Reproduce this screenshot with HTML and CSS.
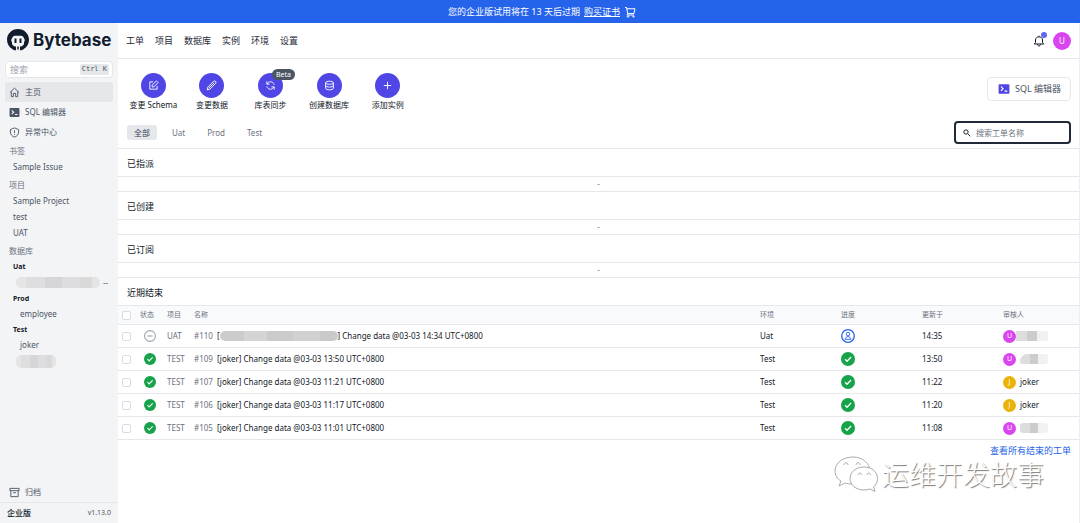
FILE: index.html
```html
<!DOCTYPE html>
<html lang="zh-CN">
<head>
<meta charset="utf-8">
<meta name="viewport" content="width=device-width, initial-scale=1">
<title>Bytebase</title>
<link rel="stylesheet" href="styles.css">
</head>
<body>
<svg class="sprite" aria-hidden="true">
  <symbol id="i-check" viewBox="0 0 20 20"><circle cx="10" cy="10" r="10" fill="#16a34a"/><path d="M5.8 10.4l2.8 2.8 5.8-6" fill="none" stroke="#fff" stroke-width="1.8"/></symbol>
  <symbol id="i-cancel" viewBox="0 0 20 20"><circle cx="10" cy="10" r="9" fill="#fff" stroke="#9ca3af" stroke-width="1.8"/><path d="M5.5 10h9" stroke="#9ca3af" stroke-width="1.8"/></symbol>
  <symbol id="i-user" viewBox="0 0 20 20"><circle cx="10" cy="10" r="9" fill="#fff" stroke="#2563eb" stroke-width="1.8"/><circle cx="10" cy="7.2" r="2.5" fill="none" stroke="#2563eb" stroke-width="1.3"/><path d="M5.9 14.8c.2-5.2 8-5.2 8.200 0z" fill="none" stroke="#2563eb" stroke-width="1.300" stroke-linejoin="round"/></symbol>
  <symbol id="i-term" viewBox="0 0 20 20"><rect x="1" y="2" width="18" height="16" rx="1.500" fill="currentColor"/><path d="M5 6l3.500 3.500L5 13M11 13.500h4.500" fill="none" stroke="#fff" stroke-width="1.900"/></symbol>
</svg>

<div class="banner">
  <span>您的企业版试用将在 13 天后过期</span>
  <a href="#">购买证书</a>
  <svg class="cart" viewBox="0 0 24 24"><path d="M2 3h3l2.500 12h12.500l2-9.500H6M7.500 15L6 18h14"/><circle cx="8" cy="21" r="1.500"/><circle cx="19" cy="21" r="1.500"/></svg>
</div>

<div class="app">
  <aside class="sidebar">
    <a class="brand" href="#">
      <svg viewBox="0 0 44 44"><path fill="#111c2e" d="M22 0C9.500 0 0 9.500 0 21.500c0 8 4 14.500 10 18.200V26c-2-2-2-5 0-7 1-3.500 3-5.500 6-5.500h12c3 0 5 2 6 5.500 2 2 2 5 0 7v13.700c6-3.700 10-10.200 10-18.200C44 9.500 34.500 0 22 0z"/><path fill="#111c2e" d="M15 19h4v9h-4zM25 19h4v9h-4zM10 30c2 4 5 5 8 5v7.500c-3 0-6-1-8-3zM34 30c-2 4-5 5-8 5v7.500c3 0 6-1 8-3zM20.500 35h3v6h-3z"/></svg>
      <span>Bytebase</span>
    </a>
    <label class="quick">
      <input type="text" placeholder="搜索" aria-label="搜索">
      <kbd>Ctrl K</kbd>
    </label>
    <nav class="menu">
      <a class="active" href="#"><svg viewBox="0 0 24 24"><path d="M2 12L12 2.500 22 12M5 10v11h4.500v-7h5v7H19V10"/></svg>主页</a>
      <a href="#"><svg viewBox="0 0 20 20"><use href="#i-term"/></svg>SQL 编辑器</a>
      <a href="#"><svg viewBox="0 0 24 24"><path d="M12 2l9 3.500V11c0 5.500-4 9.500-9 11-5-1.500-9-5.500-9-11V5.500zM12 7v6M12 15v2"/></svg>异常中心</a>
    </nav>
    <div class="tree">
      <h3>书签</h3>
      <a href="#">Sample Issue</a>
      <h3>项目</h3>
      <a href="#">Sample Project</a>
      <a href="#">test</a>
      <a href="#">UAT</a>
      <h3>数据库</h3>
      <h4>Uat</h4>
      <div class="masked"><i class="mask mask-db"></i><span>--</span></div>
      <h4>Prod</h4>
      <a class="leaf" href="#">employee</a>
      <h4>Test</h4>
      <a class="leaf" href="#">joker</a>
      <div class="masked"><i class="mask mask-leaf"></i></div>
    </div>
    <nav class="menu archive">
      <a href="#"><svg viewBox="0 0 24 24"><path d="M2 3h20v5H2zM4 8v13h16V8M9 12.500h6"/></svg>归档</a>
    </nav>
    <footer><b>企业版</b><span>v1.13.0</span></footer>
  </aside>

  <div class="content">
    <header class="topbar">
      <nav>
        <a href="#">工单</a><a href="#">项目</a><a href="#">数据库</a><a href="#">实例</a><a href="#">环境</a><a href="#">设置</a>
      </nav>
      <div class="account">
        <button class="bell" aria-label="通知"><svg viewBox="0 0 24 24"><path d="M2.500 18h19l-2.500-3V10c0-8.500-14-8.500-14 0v5zM9 18.500c0 4.500 6 4.500 6 0M12 3.500V1.500"/></svg><i class="dot"></i></button>
        <button class="avatar big">U</button>
      </div>
    </header>

    <main>
      <div class="actions">
        <div class="shortcuts">
          <button><i><svg viewBox="0 0 24 24"><path d="M11 4H4v16h16v-7M9 15v-4L18.500 2 22 5.500 13 15z"/></svg></i>变更 Schema</button>
          <button><i><svg viewBox="0 0 24 24"><path d="M2.500 21.500l1.500-6L17 2.500c3-1.500 6 1.500 4.500 4.500l-13 13zM6 18L18 6"/></svg></i>变更数据</button>
          <button><i><svg viewBox="0 0 24 24"><path d="M4 3v6h6M4.500 9c3-7 13-7 15.500 1M20 21v-6h-6M19.500 15c-3 7-13 7-15.500-1"/></svg><em>Beta</em></i>库表同步</button>
          <button><i><svg viewBox="0 0 24 24"><path d="M3.500 6v12c0 4.500 17 4.500 17 0V6M3.500 6c0-4.500 17-4.500 17 0s-17 4.500-17 0M3.500 12c0 4.500 17 4.500 17 0"/></svg></i>创建数据库</button>
          <button><i><svg viewBox="0 0 24 24"><path d="M12 4v16M4 12h16"/></svg></i>添加实例</button>
        </div>
        <button class="editor"><svg viewBox="0 0 20 20"><use href="#i-term"/></svg>SQL 编辑器</button>
      </div>

      <div class="filters">
        <div class="tabs">
          <button class="on">全部</button><button>Uat</button><button>Prod</button><button>Test</button>
        </div>
        <label class="search">
          <svg viewBox="0 0 24 24"><circle cx="9" cy="9" r="6.500"/><path d="M14 14l8 8"/></svg>
          <input type="text" placeholder="搜索工单名称" aria-label="搜索工单名称">
        </label>
      </div>

      <section><h2>已指派</h2><p>-</p></section>
      <section><h2>已创建</h2><p>-</p></section>
      <section><h2>已订阅</h2><p>-</p></section>
      <section>
        <h2>近期结束</h2>
        <table>
          <colgroup><col class="c-check"><col class="c-state"><col class="c-project"><col><col class="c-info"><col class="c-info"><col class="c-info"><col class="c-user"></colgroup>
          <thead>
            <tr><th><input type="checkbox" aria-label="全选"></th><th class="first">状态</th><th>项目</th><th>名称</th><th>环境</th><th>进度</th><th>更新于</th><th>审核人</th></tr>
          </thead>
          <tbody>
            <tr><td><input type="checkbox" aria-label="#110"></td><td><svg class="state"><use href="#i-cancel"/></svg></td><td class="dim">UAT</td><td><div class="name"><span class="dim">#110</span><span class="title">[<i class="mask mask-title"></i>] Change data @03-03 14:34 UTC+0800</span></div></td><td>Uat</td><td><svg class="step"><use href="#i-user"/></svg></td><td>14:35</td><td><div class="who"><span class="avatar">U</span><i class="mask mask-user near"></i></div></td></tr>
            <tr><td><input type="checkbox" aria-label="#109"></td><td><svg class="state"><use href="#i-check"/></svg></td><td class="dim">TEST</td><td><div class="name"><span class="dim">#109</span><span class="title">[joker] Change data @03-03 13:50 UTC+0800</span></div></td><td>Test</td><td><svg class="step"><use href="#i-check"/></svg></td><td>13:50</td><td><div class="who"><span class="avatar">U</span><i class="mask mask-user slant"></i></div></td></tr>
            <tr><td><input type="checkbox" aria-label="#107"></td><td><svg class="state"><use href="#i-check"/></svg></td><td class="dim">TEST</td><td><div class="name"><span class="dim">#107</span><span class="title">[joker] Change data @03-03 11:21 UTC+0800</span></div></td><td>Test</td><td><svg class="step"><use href="#i-check"/></svg></td><td>11:22</td><td><div class="who"><span class="avatar gold">J</span>joker</div></td></tr>
            <tr><td><input type="checkbox" aria-label="#106"></td><td><svg class="state"><use href="#i-check"/></svg></td><td class="dim">TEST</td><td><div class="name"><span class="dim">#106</span><span class="title">[joker] Change data @03-03 11:17 UTC+0800</span></div></td><td>Test</td><td><svg class="step"><use href="#i-check"/></svg></td><td>11:20</td><td><div class="who"><span class="avatar gold">J</span>joker</div></td></tr>
            <tr><td><input type="checkbox" aria-label="#105"></td><td><svg class="state"><use href="#i-check"/></svg></td><td class="dim">TEST</td><td><div class="name"><span class="dim">#105</span><span class="title">[joker] Change data @03-03 11:01 UTC+0800</span></div></td><td>Test</td><td><svg class="step"><use href="#i-check"/></svg></td><td>11:08</td><td><div class="who"><span class="avatar">U</span><i class="mask mask-user"></i></div></td></tr>
          </tbody>
        </table>
      </section>
      <div class="more"><a href="#">查看所有结束的工单</a></div>
    </main>
  </div>
</div>

<div class="watermark">
  <svg viewBox="0 0 44 36"><path d="M19 1C9 1 1 7 1 15c0 4 2 8 6 10l-2 5 6-3c2 .8 5 1 8 1 10 0 17-6 17-13S29 1 19 1z"/><path d="M30 11c-8 0-14 5-14 11.500S22 34 30 34c2 0 4-.3 6-1l5 2.500-1.500-4.500c2.500-2 4-5 4-8.500C43.500 16 38 11 30 11z"/><path d="M10 9c0-3 4-3 4 0M22 9c0-3 4-3 4 0M24 19c0-2.500 3.500-2.500 3.500 0M33 19c0-2.500 3.500-2.500 3.500 0"/></svg>
  <span>运维开发故事</span>
</div>
</body>
</html>
```

FILE: styles.css
```css
* { box-sizing: border-box; }
body {
  margin: 0;
  min-height: 100vh;
  display: flex;
  flex-direction: column;
  font: 8px/12px "Noto Sans", "Noto Sans CJK SC", sans-serif;
  color: #1f2937;
  background: #fff;
}
a { color: inherit; text-decoration: none; }
button, input { font: inherit; color: inherit; }
button { padding: 0; border: 0; background: none; cursor: pointer; }
h2, h3, h4, p { margin: 0; }
svg { fill: none; stroke: currentColor; stroke-width: 2; flex: none; }
symbol, use { stroke-width: 0; }
i, em { font-style: normal; }
.sprite { position: absolute; width: 0; height: 0; }

.banner {
  height: 23px;
  display: flex;
  align-items: center;
  justify-content: center;
  gap: 4px;
  padding-left: 4px;
  color: #fff;
  background: #2563eb;
  font-size: 9px;
}
.banner a { text-decoration: underline; }
.cart { width: 12px; height: 12px; }

.app { flex: 1; display: flex; }

.sidebar {
  width: 118px;
  flex: none;
  display: flex;
  flex-direction: column;
  background: #f3f4f6;
  color: #4b5563;
}
.brand {
  display: flex;
  align-items: center;
  gap: 4px;
  height: 34px;
  padding: 0 7px;
  color: #111c2e;
  font: 700 17px/34px Inter, sans-serif;
}
.brand svg { width: 22px; height: 22px; stroke: none; }
.quick {
  display: flex;
  align-items: center;
  height: 17px;
  margin: 4px 5px;
  padding: 0 3px 0 4px;
  border: 1px solid #e5e7eb;
  border-radius: 4px;
  background: #fff;
}
.quick input { flex: 1; min-width: 0; padding: 0; border: 0; outline: 0; font-size: 9px; background: none; }
.quick input::placeholder { color: #9ca3af; }
.quick kbd { padding: 0 2px; border-radius: 2px; background: #e5e7eb; font: 7px/11px "DejaVu Sans Mono", monospace; }
.menu { margin: 0 5px; }
.menu a { display: flex; align-items: center; gap: 5px; height: 20px; padding: 0 4px; border-radius: 2px; }
.menu svg { width: 11px; height: 11px; }
.menu .active { background: #e5e7eb; }
.tree { padding: 1px 9px; }
.tree h3 { font-size: 8px; font-weight: 400; line-height: 16px; margin-top: 2px; color: #6b7280; }
.tree h3:first-child { margin-top: 0; }
.tree h4 { padding-left: 4px; font-size: 7px; line-height: 15px; font-weight: 700; color: #111827; }
.tree a { display: block; padding-left: 4px; line-height: 16px; }
.tree .leaf { padding-left: 11px; }
.masked { display: flex; align-items: center; gap: 3px; height: 17px; padding-left: 7px; }
.mask {
  display: inline-block;
  flex: none;
  height: 11px;
  border-radius: 5px;
  background: linear-gradient(90deg, #e5e5e6 0 12%, #dedee0 12% 34%, #d6d6d8 34% 55%, #dddddf 55% 76%, #d9d9da 76% 90%, #e4e4e5 90%);
}
.mask-db { width: 84px; }
.mask-leaf { width: 40px; height: 13px; }
.archive { margin-top: auto; }
.sidebar footer {
  display: flex;
  align-items: center;
  justify-content: space-between;
  height: 21px;
  padding: 0 7px;
  border-top: 1px solid #e5e7eb;
  font-size: 7px;
}
.sidebar footer b { font-size: 8px; font-weight: 500; color: #111827; }

.content { flex: 1; min-width: 0; border-right: 1px solid #eceef1; }
.topbar {
  display: flex;
  align-items: center;
  justify-content: space-between;
  height: 36px;
  padding: 0 8px;
  border-bottom: 1px solid #e5e7eb;
}
.topbar nav { display: flex; gap: 11px; font-size: 9px; }
.account { display: flex; align-items: center; gap: 8px; }
.bell { position: relative; display: flex; color: #111827; }
.bell svg { width: 12px; height: 12px; }
.dot { position: absolute; top: -3px; right: -2px; width: 6px; height: 6px; border-radius: 50%; background: #6366f1; }
.avatar {
  display: inline-flex;
  align-items: center;
  justify-content: center;
  width: 13px;
  height: 13px;
  border-radius: 50%;
  background: #d946ef;
  color: #fff;
  font-size: 7px;
}
.avatar.big { width: 18px; height: 18px; font-size: 8px; }
.avatar.gold { background: #eab308; }

.actions { display: flex; justify-content: space-between; padding: 14px 8px 0 6px; }
.shortcuts { display: flex; width: 293px; }
.shortcuts button { flex: 1; display: flex; flex-direction: column; align-items: center; line-height: 14px; color: #111827; white-space: nowrap; }
.shortcuts i {
  position: relative;
  display: grid;
  place-items: center;
  width: 25px;
  height: 25px;
  border-radius: 50%;
  background: #4f46e5;
  color: #fff;
}
.shortcuts svg { width: 11px; height: 11px; }
.shortcuts em { position: absolute; left: 14px; top: -4px; padding: 0 4px; border-radius: 6px; background: #4b5563; font-size: 7px; line-height: 11px; }
.editor {
  display: flex;
  align-items: center;
  gap: 5px;
  height: 24px;
  margin-top: 4px;
  padding: 0 9px 0 10px;
  border: 1px solid #e5e7eb;
  border-radius: 4px;
  font-size: 9px;
  color: #4b5563;
}
.editor svg { width: 12px; height: 12px; color: #4f46e5; }
.filters {
  display: flex;
  align-items: center;
  justify-content: space-between;
  padding: 9px 8px 4px 9px;
  border-bottom: 1px solid #e5e7eb;
}
.tabs { display: flex; gap: 8px; }
.tabs button { height: 15px; padding: 0 7px; border-radius: 3px; color: #6b7280; }
.tabs .on { background: #e5e7eb; color: #374151; }
.search {
  display: flex;
  align-items: center;
  gap: 5px;
  width: 117px;
  height: 23px;
  padding: 0 7px;
  border: 2px solid #1f2937;
  border-radius: 4px;
}
.search svg { width: 8px; height: 8px; stroke-width: 3; }
.search input { flex: 1; min-width: 0; padding: 0; border: 0; outline: 0; }
.search input::placeholder { color: #6b7280; }

section h2 { padding: 4px 9px 1px; font-size: 9px; line-height: 22px; font-weight: 400; color: #111827; }
section p { border: solid #e5e7eb; border-width: 1px 0; text-align: center; line-height: 14px; color: #6b7280; }

table { width: 100%; table-layout: fixed; border-collapse: collapse; }
.c-check { width: 18px; }
.c-state { width: 28px; }
.c-project { width: 27px; }
.c-info { width: 81px; }
.c-user { width: 79px; }
th, td { padding: 0 3px; text-align: left; white-space: nowrap; }
thead tr { height: 19px; background: #f9fafb; border-top: 1px solid #e5e7eb; }
th { font-size: 7px; font-weight: 400; color: #6b7280; }
th.first { padding-left: 4px; }
tbody tr { height: 23px; border: solid #e5e7eb; border-width: 1px 0; }
td { color: #111827; }
td svg { display: block; stroke: none; }
.state { width: 12px; height: 12px; margin: 0 auto; }
.step { width: 14px; height: 14px; }
.dim { color: #6b7280; }
.name { display: flex; gap: 4px; }
.title { display: flex; align-items: center; }
.title .mask-title { width: 118px; height: 10px; background: linear-gradient(90deg, #ccc 0 20%, #d4d4d4 20% 40%, #cbcbcb 40% 62%, #d0d0d0 62% 85%, #c9c9c9 85%); }
.who { display: flex; align-items: center; gap: 4px; }
.mask-user { width: 28px; height: 10px; border-radius: 3px; background: linear-gradient(90deg, #ddd 0 35%, #ccc 35% 65%, #f1f1f1 65%); }
.near { margin-left: -4px; width: 32px; border-radius: 0; }
.slant { border-radius: 8px 3px 3px 3px; }
input[type="checkbox"] {
  appearance: none;
  display: block;
  width: 9px;
  height: 9px;
  margin: 0 1px;
  border: 1px solid #d9dce1;
  border-radius: 2px;
  background: #fff;
}
.more { padding: 5px 8px; text-align: right; font-size: 9px; color: #2563eb; }

.watermark {
  position: absolute;
  right: 36px;
  bottom: 31px;
  display: flex;
  align-items: center;
  gap: 4px;
  color: #fff;
  font-size: 27px;
  line-height: 27px;
  font-weight: 300;
  text-shadow: 1px 1px 1px #777;
  pointer-events: none;
}
.watermark svg { width: 44px; height: 36px; fill: #fff; stroke: #aaa; stroke-width: 1; }
```
